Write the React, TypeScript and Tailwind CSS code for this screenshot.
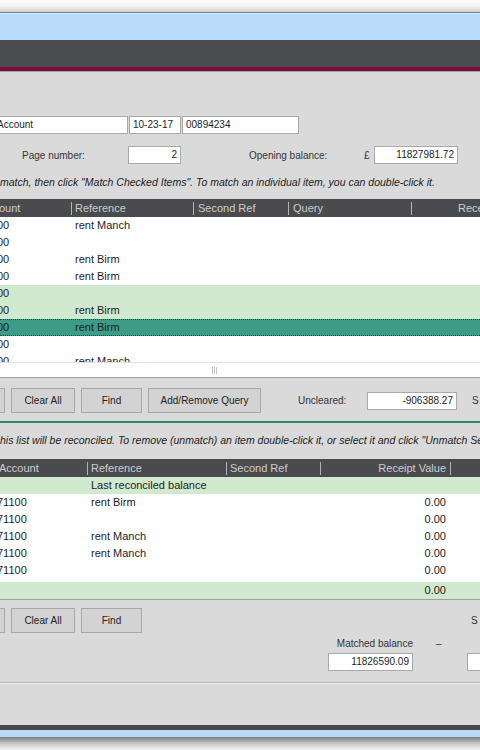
import React from "react";

const topRows: { a: string; r: string; kind: "w" | "g" | "s" }[] = [
  { a: "00", r: "rent Manch", kind: "w" },
  { a: "00", r: "", kind: "w" },
  { a: "00", r: "rent Birm", kind: "w" },
  { a: "00", r: "rent Birm", kind: "w" },
  { a: "00", r: "", kind: "g" },
  { a: "00", r: "rent Birm", kind: "g" },
  { a: "00", r: "rent Birm", kind: "s" },
  { a: "00", r: "", kind: "w" },
  { a: "00", r: "rent Manch", kind: "w" },
];

const bottomRows = [
  { a: "71100", r: "rent Birm", v: "0.00" },
  { a: "71100", r: "", v: "0.00" },
  { a: "71100", r: "rent Manch", v: "0.00" },
  { a: "71100", r: "rent Manch", v: "0.00" },
  { a: "71100", r: "", v: "0.00" },
];

function Sep() {
  return <span className="w-px h-[13px] bg-[#b4b4b4] shrink-0" />;
}

function Btn({ label, w }: { label: string; w: string }) {
  return (
    <div
      className={`${w} h-[25px] shrink-0 bg-[#d3d3d3] border border-[#a7a7a7] flex items-center justify-center text-[10px] text-[#222]`}
    >
      {label}
    </div>
  );
}

export default function App() {
  return (
    <div className="w-[480px] h-[750px] overflow-hidden flex flex-col bg-[#f2f2f2] font-['Liberation_Sans',Arial,sans-serif] text-[#1e1e1e]">
      {/* top frame */}
      <div className="h-[12px] shrink-0 bg-gradient-to-b from-[#fbfbfb] via-[#f4f4f4] to-[#cfcfcf]" />
      <div className="h-px shrink-0 bg-[#7f8184]" />
      <div className="h-px shrink-0 bg-[#d6e9fa]" />
      <div className="h-[26px] shrink-0 bg-[#b8dbf9]" />
      <div className="h-[27px] shrink-0 bg-[#4b4c50]" />
      <div className="h-[4px] shrink-0 bg-[#7b0d3d]" />
      <div className="h-px shrink-0 bg-[#a4a4a4]" />

      {/* content */}
      <div className="flex-1 flex flex-col bg-[#dadada] overflow-hidden">
        {/* account row */}
        <div className="mt-[44px] h-[18px] flex gap-px">
          <div className="w-[128px] h-[18px] bg-white border border-l-0 border-[#a9a9a9] text-[10px] leading-[16px] whitespace-nowrap overflow-hidden">
            <span className="inline-block -ml-[3px]">Account</span>
          </div>
          <div className="w-[52px] h-[18px] bg-white border border-[#a9a9a9] text-[10px] leading-[16px] pl-[3px]">
            10-23-17
          </div>
          <div className="w-[117px] h-[18px] bg-white border border-[#a9a9a9] text-[10px] leading-[16px] pl-[3px]">
            00894234
          </div>
        </div>

        {/* page number row */}
        <div className="mt-[12px] h-[18px] flex items-center text-[10px]">
          <div className="w-[128px] pl-[22px] text-[#333]">Page number:</div>
          <div className="w-[53px] h-[18px] bg-white border border-[#a9a9a9] leading-[16px] text-right pr-[3px]">
            2
          </div>
          <div className="w-[68px]" />
          <div className="w-[115px] text-[#333]">Opening balance:</div>
          <div className="w-[10px] text-[#333]">£</div>
          <div className="w-[84px] h-[18px] bg-white border border-[#a9a9a9] leading-[16px] text-right pr-[3px]">
            11827981.72
          </div>
        </div>

        {/* instruction */}
        <div className="mt-[12px] h-[13px] leading-[13px] italic text-[10.5px] whitespace-nowrap text-[#222]">
          match, then click "Match Checked Items". To match an individual item, you can double-click it.
        </div>

        {/* top table */}
        <div className="mt-[10px] h-[18px] bg-[#4a4b4f] flex items-center text-[11px] text-[#cdcdcd] whitespace-nowrap overflow-hidden">
          <div className="w-[71px] shrink-0">
            <span className="inline-block -ml-px">ount</span>
          </div>
          <div className="w-[122px] shrink-0 flex items-center">
            <Sep />
            <span className="pl-[3px]">Reference</span>
          </div>
          <div className="w-[95px] shrink-0 flex items-center">
            <Sep />
            <span className="pl-[4px]">Second Ref</span>
          </div>
          <div className="w-[123px] shrink-0 flex items-center">
            <Sep />
            <span className="pl-[4px]">Query</span>
          </div>
          <div className="flex-1 flex items-center">
            <Sep />
            <span className="pl-[46px]">Receipt Value</span>
          </div>
        </div>
        <div className="h-[145px] bg-white overflow-hidden">
          {topRows.map((row, i) => (
            <div
              key={i}
              className={`h-[17px] flex items-center text-[11px] whitespace-nowrap ${
                row.kind === "g"
                  ? "bg-[#d0e9cf]"
                  : row.kind === "s"
                  ? "bg-[#3d9c87] border-y border-dotted border-[#1d4d42]"
                  : "bg-white"
              }`}
            >
              <div className="w-[75px] shrink-0">
                <span className="inline-block -ml-[3px]">{row.a}</span>
              </div>
              <div>{row.r}</div>
            </div>
          ))}
        </div>
        <div className="h-[15px] bg-white border-t border-[#e2e2e2] flex items-center">
          <div className="ml-[212px] w-[6px] h-[7px] flex gap-px">
            <span className="w-px h-full bg-[#c4c4c4]" />
            <span className="w-px h-full bg-[#c4c4c4]" />
            <span className="w-px h-full bg-[#c4c4c4]" />
          </div>
        </div>
        <div className="h-px bg-[#9e9e9e]" />

        {/* top buttons */}
        <div className="mt-[10px] h-[25px] flex items-center gap-[6px] -ml-[12px]">
          <Btn label="" w="w-[17px]" />
          <Btn label="Clear All" w="w-[64px]" />
          <Btn label="Find" w="w-[61px]" />
          <Btn label="Add/Remove Query" w="w-[113px]" />
          <div className="w-[25px]" />
          <div className="w-[63px] text-[10px] text-[#333]">Uncleared:</div>
          <div className="w-[90px] h-[18px] bg-white border border-[#a9a9a9] text-[10px] leading-[16px] text-right pr-[3px] shrink-0">
            -906388.27
          </div>
          <div className="ml-[9px] text-[10px] text-[#333]">S</div>
        </div>

        <div className="mt-[8px] h-[2px] bg-[#2a8a6e]" />

        {/* instruction 2 */}
        <div className="mt-[11px] h-[13px] leading-[13px] italic text-[10.5px] whitespace-nowrap text-[#222]">
          his list will be reconciled. To remove (unmatch) an item double-click it, or select it and click "Unmatch Selected"
        </div>

        {/* bottom table */}
        <div className="mt-[12px] h-[18px] bg-[#4a4b4f] flex items-center text-[11px] text-[#cdcdcd] whitespace-nowrap overflow-hidden">
          <div className="w-[87px] shrink-0">
            <span className="inline-block -ml-[1px]">Account</span>
          </div>
          <div className="w-[139px] shrink-0 flex items-center">
            <Sep />
            <span className="pl-[3px]">Reference</span>
          </div>
          <div className="w-[94px] shrink-0 flex items-center">
            <Sep />
            <span className="pl-[3px]">Second Ref</span>
          </div>
          <div className="w-[130px] shrink-0 flex items-center">
            <Sep />
            <span className="flex-1 text-right pr-[4px]">Receipt Value</span>
          </div>
          <div className="flex-1 flex items-center">
            <Sep />
          </div>
        </div>
        <div className="bg-white border-b border-[#a0a0a0]">
          <div className="h-[17px] bg-[#d0e9cf] flex items-center text-[11px]">
            <div className="w-[91px] shrink-0" />
            <div>Last reconciled balance</div>
          </div>
          {bottomRows.map((row, i) => (
            <div key={i} className="h-[17px] flex items-center text-[11px] whitespace-nowrap">
              <div className="w-[91px] shrink-0">
                <span className="inline-block -ml-[3px]">{row.a}</span>
              </div>
              <div className="w-[229px] shrink-0">{row.r}</div>
              <div className="w-[126px] shrink-0 text-right">{row.v}</div>
            </div>
          ))}
          <div className="h-[3px]" />
          <div className="h-[17px] bg-[#d0e9cf] flex items-center text-[11px]">
            <div className="w-[446px] shrink-0 text-right">0.00</div>
          </div>
        </div>

        {/* bottom buttons */}
        <div className="mt-[8px] h-[25px] flex items-center gap-[6px] -ml-[12px]">
          <Btn label="" w="w-[17px]" />
          <Btn label="Clear All" w="w-[64px]" />
          <Btn label="Find" w="w-[61px]" />
          <div className="ml-[323px] text-[10px] text-[#333]">S</div>
        </div>

        {/* matched balance */}
        <div className="mt-[5px] flex">
          <div className="w-[328px] shrink-0" />
          <div className="w-[85px] shrink-0 flex flex-col">
            <div className="h-[12px] leading-[12px] text-[10px] text-right text-[#333]">Matched balance</div>
            <div className="mt-[3px] h-[18px] bg-white border border-[#a9a9a9] text-[10px] leading-[16px] text-right pr-[3px]">
              11826590.09
            </div>
          </div>
          <div className="w-[54px] shrink-0 flex flex-col">
            <div className="h-[12px] leading-[12px] text-[10px] pl-[23px] text-[#333]">–</div>
          </div>
          <div className="flex flex-col">
            <div className="h-[12px]" />
            <div className="mt-[3px] w-[90px] h-[18px] bg-white border border-[#a9a9a9]" />
          </div>
        </div>

        <div className="mt-[11px] h-px bg-[#b6b6b6]" />
        <div className="h-px bg-[#ececec]" />
      </div>

      {/* bottom frame */}
      <div className="h-[5px] shrink-0 bg-[#47494c]" />
      <div className="h-[7px] shrink-0 bg-[#b8dbf9]" />
      <div className="h-[13px] shrink-0 bg-gradient-to-b from-[#7d7d7d] via-[#c8c8c8] to-[#f4f4f4]" />
    </div>
  );
}
